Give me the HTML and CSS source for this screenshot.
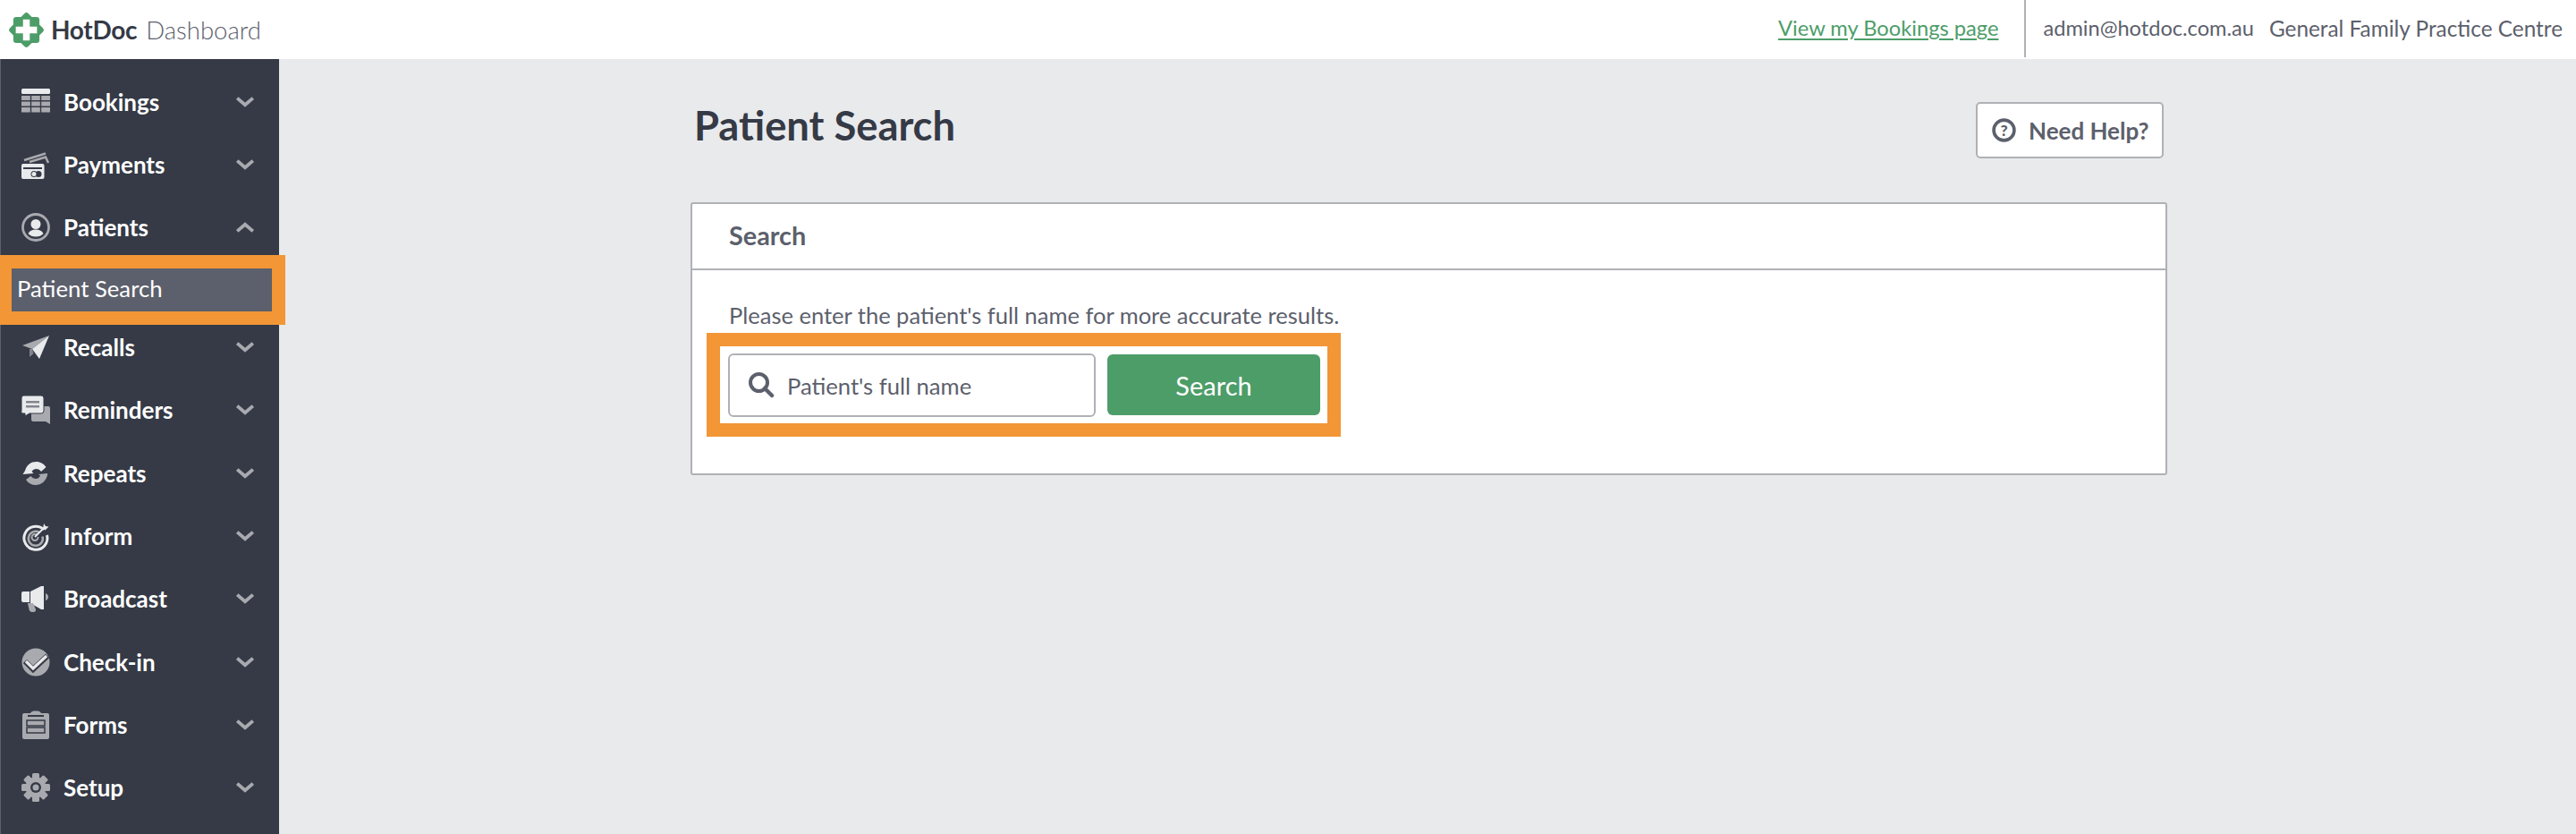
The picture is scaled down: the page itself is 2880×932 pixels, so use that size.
FILE: index.html
```html
<!DOCTYPE html>
<html lang="en">
<head>
<meta charset="utf-8">
<title>HotDoc Dashboard - Patient Search</title>
<link rel="stylesheet" href="styles.css">
</head>
<body>
<header class="topbar">
  <div class="brand">
    <svg class="logo" viewBox="0 0 38 38"><rect x="5.500" y="5.500" width="27" height="27" rx="3" fill="#4d9d68"/><rect x="5.500" y="5.500" width="27" height="27" rx="3" fill="#4d9d68" transform="rotate(45 19 19)"/><path d="M15.500 8h7v7.500h7.500v7h-7.500v7.500h-7v-7.500h-7.500v-7h7.500z" fill="#fff"/></svg>
    <span class="brand-name">HotDoc</span>
    <span class="brand-sub">Dashboard</span>
  </div>
  <div class="top-right">
    <a class="top-link" href="#">View my Bookings page</a>
    <div class="top-divider"></div>
    <span class="top-user">admin@hotdoc.com.au</span>
    <span class="top-practice">General Family Practice Centre</span>
  </div>
</header>
<div class="layout">
  <nav class="sidebar">
    <div class="nav-item">
      <svg class="nav-icon" viewBox="0 0 32 32"><rect x="0" y="1" width="32" height="6" rx="1.500" fill="#e9eaec"/><path d="M0 9h9.800v5H0zM11.200 9h9.600v5h-9.600zM22.200 9H32v5h-9.800zM0 15.500h9.800v5H0zM11.200 15.500h9.600v5h-9.600zM22.200 15.500H32v5h-9.800zM0 22h9.800v5.500H0zM11.200 22h9.600v5.500h-9.600zM22.200 22H32v5.500h-9.800z" fill="#a9aaaf"/></svg>
      <span class="nav-label">Bookings</span>
      <svg class="chev" viewBox="0 0 20 12"><path d="M2 2l8 7 8-7"/></svg>
    </div>
    <div class="nav-item">
      <svg class="nav-icon" viewBox="0 0 32 32"><path d="M3 11L27 3.500M9 13l18-5.500 3 6.500" fill="none" stroke="#a9aaaf" stroke-width="2.500"/><rect x="0" y="15" width="25.500" height="17" rx="2" fill="#e9eaec"/><rect x="2" y="19" width="21" height="2" fill="#353a46"/><circle cx="14" cy="26.500" r="3.500" fill="#353a46"/><circle cx="19" cy="26.500" r="3.500" fill="#353a46"/><circle cx="14" cy="26.500" r="2.500" fill="#e9eaec"/></svg>
      <span class="nav-label">Payments</span>
      <svg class="chev" viewBox="0 0 20 12"><path d="M2 2l8 7 8-7"/></svg>
    </div>
    <div class="nav-item">
      <svg class="nav-icon" viewBox="0 0 32 32"><circle cx="16" cy="16" r="14.500" fill="none" stroke="#a9aaaf" stroke-width="2.800"/><circle cx="16" cy="12.500" r="5.500" fill="#e9eaec"/><path d="M7.500 23c2-3.500 5-4.500 8.500-4.500s6.500 1 8.500 4.500c-2 2.500-5 3.500-8.500 3.500s-6.500-1-8.500-3.500z" fill="#e9eaec"/></svg>
      <span class="nav-label">Patients</span>
      <svg class="chev" viewBox="0 0 20 12"><path d="M2 10l8-7 8 7"/></svg>
    </div>
    <a class="nav-sub" href="#"><span>Patient Search</span></a>
    <div class="nav-item">
      <svg class="nav-icon" viewBox="0 0 32 32"><path d="M1 14L31 3 12 18z" fill="#a9aaaf"/><path d="M31 3L20 29l-8-11z" fill="#e9eaec"/><path d="M9 18l3 0 1.500 5-4.500 4z" fill="#85868d"/></svg>
      <span class="nav-label">Recalls</span>
      <svg class="chev" viewBox="0 0 20 12"><path d="M2 2l8 7 8-7"/></svg>
    </div>
    <div class="nav-item">
      <svg class="nav-icon" viewBox="0 0 32 32"><path d="M11 12h19a2 2 0 0 1 2 2v18l-5-3H13a2 2 0 0 1-2-2z" fill="#a9aaaf"/><path d="M2 0h20a3 3 0 0 1 3 3v14a3 3 0 0 1-3 3H9l-5 3v-3H2a2 2 0 0 1-2-3V3a3 3 0 0 1 2-3z" fill="#e9eaec" stroke="#353a46" stroke-width="1"/><path d="M5 6h15v2.500H5zM5 11h15v2.500H5z" fill="#85868d"/></svg>
      <span class="nav-label">Reminders</span>
      <svg class="chev" viewBox="0 0 20 12"><path d="M2 2l8 7 8-7"/></svg>
    </div>
    <div class="nav-item">
      <svg class="nav-icon" viewBox="0 0 32 32"><path d="M4 13C6 6 11 3 16.500 3c5 0 8.500 2.500 11 6l-5.500 5c-1.500-2-3-3-5.500-3-2 0-4 1-5 3l2 2-12 1z" fill="#e9eaec"/><path d="M29 18c-2 7-7 11-13 11-4.500 0-8.500-2-11-6l5.500-4c1.500 2 3.500 3 5.500 3 2 0 4-1 5-3.500l-2-1.500 10-1z" fill="#a9aaaf"/></svg>
      <span class="nav-label">Repeats</span>
      <svg class="chev" viewBox="0 0 20 12"><path d="M2 2l8 7 8-7"/></svg>
    </div>
    <div class="nav-item">
      <svg class="nav-icon" viewBox="0 0 32 32"><path d="M25 9a13 13 0 1 0 3.500 6" fill="none" stroke="#e9eaec" stroke-width="3"/><path d="M20 12a8 8 0 1 0 3.500 4.500" fill="none" stroke="#a9aaaf" stroke-width="2.500"/><path d="M17.500 15a3.500 3.500 0 1 0 1 2" fill="none" stroke="#a9aaaf" stroke-width="2"/><path d="M15 17L26 6" stroke="#e9eaec" stroke-width="2"/><path d="M24 8l1-6 2 3 3.500.5-4 4z" fill="#e9eaec"/></svg>
      <span class="nav-label">Inform</span>
      <svg class="chev" viewBox="0 0 20 12"><path d="M2 2l8 7 8-7"/></svg>
    </div>
    <div class="nav-item">
      <svg class="nav-icon" viewBox="0 0 32 32"><path d="M2 8h7v12H2a2 2 0 0 1-2-2v-8a2 2 0 0 1 2-2z" fill="#e9eaec"/><path d="M10 8l12-6h3v26h-3l-12-7z" fill="#e9eaec"/><path d="M27 10c2 .5 3 2.500 3 4s-1 3.500-3 4z" fill="#a9aaaf"/><path d="M7 21h6l3 7c.5 2-1 3-3 3h-1c-2 0-3-1-3.500-3z" fill="#a9aaaf"/></svg>
      <span class="nav-label">Broadcast</span>
      <svg class="chev" viewBox="0 0 20 12"><path d="M2 2l8 7 8-7"/></svg>
    </div>
    <div class="nav-item">
      <svg class="nav-icon" viewBox="0 0 32 32"><circle cx="16" cy="16" r="15.500" fill="#a9aaaf"/><path d="M4 15l9 9L29 9" fill="none" stroke="#353a46" stroke-width="6"/><path d="M5 15l8 8L28 9" fill="none" stroke="#e9eaec" stroke-width="3.200"/></svg>
      <span class="nav-label">Check-in</span>
      <svg class="chev" viewBox="0 0 20 12"><path d="M2 2l8 7 8-7"/></svg>
    </div>
    <div class="nav-item">
      <svg class="nav-icon" viewBox="0 0 32 32"><path d="M3 3h7c1-2 2.500-2.500 6-2.500s5 .5 6 2.500h7a2 2 0 0 1 2 2v25a2 2 0 0 1-2 2H3a2 2 0 0 1-2-2V5a2 2 0 0 1 2-2z" fill="#a9aaaf"/><path d="M7 6h18" stroke="#353a46" stroke-width="2"/><rect x="6" y="11" width="20" height="6" fill="#a9aaaf" stroke="#353a46" stroke-width="1.500"/><rect x="6" y="19" width="20" height="6" fill="#a9aaaf" stroke="#353a46" stroke-width="1.500"/></svg>
      <span class="nav-label">Forms</span>
      <svg class="chev" viewBox="0 0 20 12"><path d="M2 2l8 7 8-7"/></svg>
    </div>
    <div class="nav-item">
      <svg class="nav-icon" viewBox="0 0 32 32"><g fill="#a9aaaf"><rect x="12" y="0" width="8" height="32" rx="1.500"/><rect x="12" y="0" width="8" height="32" rx="1.500" transform="rotate(45 16 16)"/><rect x="12" y="0" width="8" height="32" rx="1.500" transform="rotate(90 16 16)"/><rect x="12" y="0" width="8" height="32" rx="1.500" transform="rotate(135 16 16)"/><circle cx="16" cy="16" r="11.500"/></g><circle cx="16" cy="16" r="6" fill="#353a46"/><circle cx="16" cy="16" r="3.500" fill="#a9aaaf"/></svg>
      <span class="nav-label">Setup</span>
      <svg class="chev" viewBox="0 0 20 12"><path d="M2 2l8 7 8-7"/></svg>
    </div>
  </nav>
  <main class="main">
    <div class="page-head">
      <h1 class="page-title">Patient Search</h1>
      <button class="help-btn">
        <svg class="help-icon" viewBox="0 0 26 26"><circle cx="13" cy="13" r="11" fill="none" stroke="#5c606c" stroke-width="3.500"/><text x="13" y="19" text-anchor="middle" class="help-q">?</text></svg>
        Need Help?
      </button>
    </div>
    <section class="card">
      <h2 class="card-title">Search</h2>
      <div class="card-body">
        <p class="hint">Please enter the patient's full name for more accurate results.</p>
        <form class="search-box">
          <label class="search-field">
            <svg class="search-icon" viewBox="0 0 30 30"><circle cx="12.500" cy="12.500" r="9.500" fill="none" stroke="#5c606c" stroke-width="4"/><path d="M19 19l8 8" stroke="#5c606c" stroke-width="4.500" stroke-linecap="round"/></svg>
            <span class="placeholder">Patient's full name</span>
          </label>
          <button class="search-btn" type="button">Search</button>
        </form>
      </div>
    </section>
  </main>
</div>
</body>
</html>
```
FILE: styles.css
```css
* { box-sizing: border-box; }
html, body { margin: 0; height: 932px; overflow: hidden; }
body { font-family: Lato, "Liberation Sans", sans-serif; background: #e9eaec; color: #5c606c; }

.topbar { height: 66px; background: #fff; display: flex; justify-content: space-between; align-items: flex-start; }
.brand { display: flex; align-items: center; height: 66px; padding-left: 9px; }
.logo { width: 41px; height: 41px; margin-right: 7px; }
.brand-name { font-size: 28px; font-weight: 700; color: #353a46; letter-spacing: -0.3px; }
.brand-sub { font-size: 27.500px; font-weight: 300; color: #5c606c; margin-left: 10px; }
.top-right { display: flex; align-items: center; height: 64px; padding: 0 15px 2px 0; }
.top-link { font-size: 23.700px; color: #4d9d68; text-decoration: underline; text-underline-offset: 3px; }
.top-divider { width: 2px; height: 64px; background: #b0b1b6; margin: 2px 19px 0 29px; }
.top-user { font-size: 23.600px; }
.top-practice { font-size: 24.350px; margin-left: 17px; }

.layout { display: flex; height: 866px; }
.sidebar { width: 312px; flex: none; background: #353a46; border-left: 1px solid #5c606c; padding-top: 22.500px; }
.nav-item { height: 50px; margin-bottom: 20.300px; display: flex; align-items: center; padding-left: 23px; padding-right: 27px; color: #fff; }
.nav-icon { width: 32px; height: 32px; flex: none; overflow: visible; }
.nav-label { font-size: 26px; font-weight: 700; margin-left: 15px; flex: 1; color: #fff; }
.chev { width: 22px; height: 14px; flex: none; fill: none; stroke: #a9aaaf; stroke-width: 3.500; }
.nav-sub { display: block; width: 319px; height: 78px; margin: -14.300px 0 0 -1px; border: 15px solid #f29636; border-left-width: 13px; background: #5c606c; color: #fff; font-size: 25.700px; line-height: 45px; text-decoration: none; position: relative; }
.nav-sub span { padding-left: 6px; }

.main { flex: 1; padding: 38px 457px 0 460px; }
.page-head { display: flex; justify-content: space-between; align-items: flex-start; height: 122px; }
.page-title { margin: 0 0 0 4px; font-size: 45.300px; font-weight: 700; color: #353a46; line-height: 72px; }
.help-btn { margin: 10px 4px 0 0; width: 210px; height: 63px; display: flex; align-items: center; gap: 14px; padding: 0 0 0 16px; background: #fff; border: 2px solid #b0b1b6; border-radius: 5px; font-family: inherit; font-size: 26px; font-weight: 700; color: #5c606c; }
.help-icon { width: 27px; height: 27px; }
.help-q { font-family: Lato, sans-serif; font-size: 17px; font-weight: 900; fill: #5c606c; }

.card { background: #fff; border: 2px solid #b0b1b6; border-radius: 3px; width: 1651px; height: 305px; }
.card-title { margin: 0; height: 74px; border-bottom: 2px solid #b0b1b6; padding-left: 41px; font-size: 28.800px; font-weight: 700; line-height: 70px; color: #5c606c; }
.card-body { padding-left: 16px; }
.hint { margin: 0 0 0 25px; height: 70px; font-size: 25.500px; line-height: 100px; }
.search-box { display: flex; align-items: center; width: 709px; height: 116px; border: 15px solid #f29636; background: #fff; padding: 0 0 0 9px; }
.search-field { width: 411px; height: 71px; display: flex; align-items: center; border: 2px solid #b0b1b6; border-radius: 6px; padding-left: 20px; }
.search-icon { width: 30px; height: 30px; }
.placeholder { font-size: 25.600px; margin: 2px 0 0 14px; }
.search-btn { width: 238px; height: 68px; margin-left: 13px; background: #4d9d68; color: #fff; border: 0; border-radius: 6px; font-family: inherit; font-size: 29px; }
```
